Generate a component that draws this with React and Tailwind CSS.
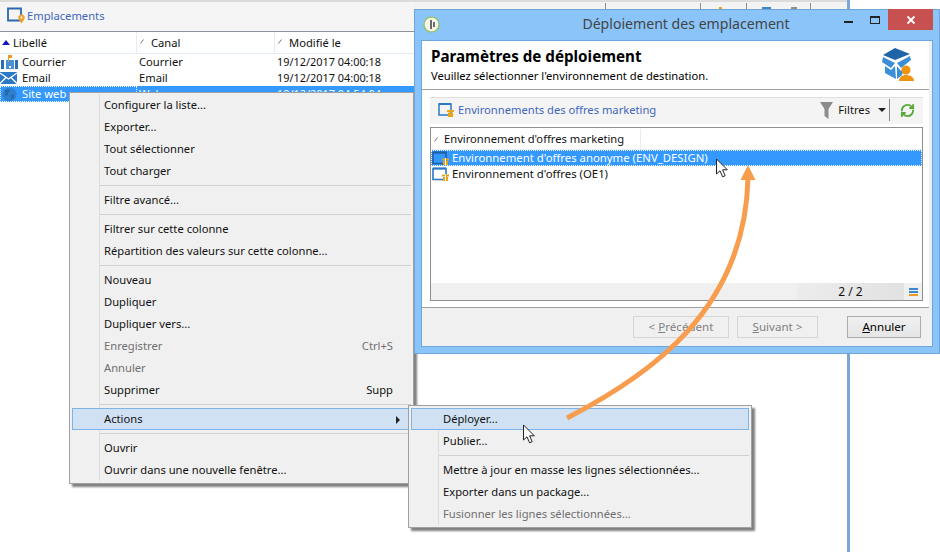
import React from "react";
import { RefreshCw } from "lucide-react";

const Cursor = ({ className }) => (
  <svg className={className} width="14" height="20" viewBox="0 0 14 20">
    <path d="M1.5 1v15l3.5-3.2 2.6 6 2.6-1.1-2.6-5.9h4.7z" fill="#fff" stroke="#222" strokeWidth="1" />
  </svg>
);

const EnvIcon = ({ dim }) => (
  <svg width="20" height="16" viewBox="0 0 20 16" className="shrink-0">
    <path d="M1 2.500h13v11H1z" fill={dim ? "none" : "#fff"} stroke={dim ? "#1f5fa8" : "#2a78c8"} strokeWidth="1.600" />
    <path d="M1 2.500h13" stroke={dim ? "#1f5fa8" : "#2a78c8"} strokeWidth="2" />
    <path d="M10 8.500h7v2h-7zM11 11h5v4h-5z" fill="#e8a317" />
    <path d="M13 8h1v7h-1z" fill="#fff" />
  </svg>
);

const MenuItem = ({ children, hint, active, disabled, arrow }) => (
  <div className={`relative flex h-[22px] items-center pl-[31px] pr-[17px] border ${active ? "border-[#7fb4e8] bg-[#cfe1f3]" : "border-transparent"} ${disabled ? "text-[#6f6f6f]" : "text-[#111]"}`}>
    <span className="flex-1 whitespace-nowrap">{children}</span>
    {hint && <span className="whitespace-nowrap">{hint}</span>}
    {arrow && <span className="absolute right-[10px] top-[7px] h-0 w-0 border-y-[4px] border-l-[4px] border-y-transparent border-l-[#222]" />}
  </div>
);

const Sep = () => (
  <div className="ml-[28px] flex h-[7px] items-center">
    <div className="h-px flex-1 bg-[#d0d0d0]" />
  </div>
);

const Row = ({ icon, label, canal, date }) => (
  <div className="flex h-[16px] items-center">
    <div className="flex w-[139px] items-center">
      <span className="flex w-[22px] shrink-0 items-center">{icon}</span>
      <span>{label}</span>
    </div>
    <div className="w-[138px]">{canal}</div>
    <div className="whitespace-nowrap text-[10.9px]">{date}</div>
  </div>
);

const Head = ({ w, pl, sort, children }) => (
  <div className={`relative flex h-full items-center border-r border-[#e3edf8] pt-[1px] ${w} ${pl}`}>
    {sort}
    <span>{children}</span>
  </div>
);

const Slash = ({ className }) => (
  <svg className={className} width="4" height="5" viewBox="0 0 4 5"><path d="M.5 4.5L3.5.5" stroke="#777" strokeWidth="1" fill="none" /></svg>
);

export default function App() {
  return (
    <div className="relative h-[552px] w-[940px] overflow-hidden bg-white text-[11.2px] leading-none text-[#111]" style={{ fontFamily: '"Noto Sans", sans-serif' }}>
      {/* Application behind */}
      <div className="flex h-full w-[850px] flex-col border-r-[3px] border-[#7aa7d8]">
        <div className="h-[2px] bg-[#dcdcdc]" />
        <div className="flex h-[30px] items-center border-b border-[#8b929a] bg-[#f5f5f5] pl-[7px] pb-[1px]">
          <svg width="19" height="18" viewBox="0 0 19 18" className="mr-[1px]">
            <path d="M1 1.500h13v12H1z" fill="none" stroke="#2a69ad" strokeWidth="1.800" />
            <path d="M14.500 7.500c2 0 3.300 1.400 3.300 3.100 0 1.800-2.100 4.200-3.300 6-1.200-1.800-3.300-4.200-3.300-6 0-1.700 1.300-3.100 3.300-3.100z" fill="#f0a030" />
            <circle cx="14.500" cy="10.500" r="1" fill="#fff" />
          </svg>
          <span className="text-[#3f66bd]">Emplacements</span>
        </div>
        <div className="flex h-[22px] items-center border-b border-[#e3edf8]">
          <Head w="w-[137px]" pl="pl-[13px]" sort={<span className="absolute left-[2px] top-[8px] h-0 w-0 border-x-[4px] border-b-[5px] border-x-transparent border-b-[#1414c8]" />}>Libellé</Head>
          <Head w="w-[138px]" pl="pl-[14px]" sort={<Slash className="absolute left-[3px] top-[7px]" />}>Canal</Head>
          <Head w="w-[572px]" pl="pl-[14px]" sort={<Slash className="absolute left-[3px] top-[7px]" />}>Modifié le</Head>
        </div>
        <Row
          label="Courrier" canal="Courrier" date="19/12/2017 04:00:18"
          icon={
            <svg width="20" height="15" viewBox="0 0 20 15">
              <path d="M1 5h3v9H1zM15 5h3v9h-3z" fill="#2a6fb5" />
              <path d="M6 5h8v9H6z" fill="#4a90d2" />
              <path d="M8 0h4v3H8z" fill="#eb9a28" />
              <path d="M8 0h1v7H8z" fill="#eb9a28" />
              <path d="M9 11h2v2H9z" fill="#fff" />
            </svg>
          }
        />
        <Row
          label="Email" canal="Email" date="19/12/2017 04:00:18"
          icon={
            <svg width="17" height="12" viewBox="0 0 17 12">
              <path d="M0 0h17v12H0z" fill="#2a78c8" />
              <path d="M0 1l8.500 6L17 1M0 11.500l6-6M17 11.500l-6-6" stroke="#fff" strokeWidth="1.300" fill="none" />
            </svg>
          }
        />
        <div className="flex h-[16px] items-center bg-[#3399ff] text-white">
          <div className="flex h-full w-[137px] items-center border border-dotted border-white">
            <span className="flex w-[21px] shrink-0 items-center pl-[1px]">
              <svg width="15" height="15" viewBox="0 0 15 15">
                <circle cx="7.500" cy="7.500" r="7" fill="#2f7fd0" />
                <path d="M3 3c2-1 4-1 5 0 0 2-2 2-2 4 0 2-2 2-3 1zM9 8c2-1 3 0 3 1s-1 3-3 3z" fill="#2769ad" />
              </svg>
            </span>
            <span>Site web</span>
          </div>
          <div className="w-[140px] pl-[2px]">Web</div>
          <div className="whitespace-nowrap text-[10.9px]">19/12/2017 04:54:04</div>
        </div>
      </div>

      {/* Top of the columns seen above the dialog */}
      <div className="absolute left-[414px] top-0 h-[9px] w-[433px] border-t-2 border-[#dcdcdc] bg-[#f3f3f3]">
        <div className="absolute left-[191px] top-[1px] h-[6px] w-px bg-[#8f8f8f]" />
        <div className="absolute left-[286px] top-[1px] h-[6px] w-px bg-[#8f8f8f]" />
        <div className="absolute left-[332px] top-[1px] h-[6px] w-px bg-[#8f8f8f]" />
        <div className="absolute left-[396px] top-[1px] h-[6px] w-px bg-[#8f8f8f]" />
        <div className="absolute left-[305px] top-[5px] h-[2px] w-[3px] bg-[#e8a317]" />
        <div className="absolute left-[348px] top-[5px] h-[2px] w-[9px] bg-[#3f86c8]" />
        <div className="absolute left-[377px] top-[5px] h-[2px] w-[6px] bg-[#8f8f8f]" />
      </div>

      {/* Context menu */}
      <div className="absolute left-[69px] top-[92px] w-[345px] border border-[#a0a0a0] bg-[#f0f0f0] px-[2px] pb-[2px] pt-[1px] shadow-[3px_3px_2px_#808080]">
        <div className="absolute bottom-[2px] left-[29px] top-[1px] w-px bg-[#dcdcdc]" />
        {[
          ["Configurer la liste..."], ["Exporter..."], ["Tout sélectionner"], ["Tout charger"], 0,
          ["Filtre avancé..."], 0,
          ["Filtrer sur cette colonne"], ["Répartition des valeurs sur cette colonne..."], 0,
          ["Nouveau"], ["Dupliquer"], ["Dupliquer vers..."], ["Enregistrer", "Ctrl+S", true], ["Annuler", null, true], ["Supprimer", "Supp"], 0,
        ].map((it, i) =>
          it === 0 ? <Sep key={i} /> : (
            <MenuItem key={i} hint={it[1]} disabled={it[2]}>{it[0]}</MenuItem>
          )
        )}
        <MenuItem active arrow>Actions</MenuItem>
        <Sep />
        <MenuItem>Ouvrir</MenuItem>
        <MenuItem>Ouvrir dans une nouvelle fenêtre...</MenuItem>
      </div>

      {/* Sub menu */}
      <div className="absolute left-[408px] top-[405px] w-[344px] border border-[#a0a0a0] bg-[#f0f0f0] p-[2px] shadow-[3px_3px_2px_#808080]">
        <div className="absolute bottom-[2px] left-[29px] top-[2px] w-px bg-[#dcdcdc]" />
        <MenuItem active>Déployer...</MenuItem>
        <MenuItem>Publier...</MenuItem>
        <Sep />
        <MenuItem>Mettre à jour en masse les lignes sélectionnées...</MenuItem>
        <MenuItem>Exporter dans un package...</MenuItem>
        <MenuItem disabled>Fusionner les lignes sélectionnées...</MenuItem>
      </div>

      {/* Dialog */}
      <div className="absolute left-[414px] top-[9px] flex h-[345px] w-[526px] flex-col border border-[#6ea6dc] bg-[#8ac4f8] px-[6px] pb-[6px]">
        <div className="relative flex h-[30px] shrink-0 items-center justify-center pb-[2px] pl-[18px]">
          <span className="text-[14.1px] text-[#444]">Déploiement des emplacement</span>
          <svg className="absolute left-[2px] top-[6px]" width="17" height="17" viewBox="0 0 17 17">
            <circle cx="8.500" cy="8.500" r="7.500" fill="#f4f6ea" stroke="#8fbf50" strokeWidth="1.200" />
            <path d="M7 4h2v9H7zM10 6h2v5h-2z" fill="#6a6a6a" />
          </svg>
          <div className="absolute left-[423px] top-[11px] h-[2px] w-[9px] bg-[#222]" />
          <div className="absolute left-[449px] top-[6px] h-[8px] w-[10px] border border-t-2 border-[#222]" />
          <div className="absolute left-[467px] top-[-1px] flex h-[21px] w-[45px] items-center justify-center bg-[#c75050]">
            <svg width="10" height="10" viewBox="0 0 10 10"><path d="M1.500 1.500l7 7M8.500 1.500l-7 7" stroke="#fff" strokeWidth="1.800" /></svg>
          </div>
        </div>

        <div className="flex min-h-0 flex-1 flex-col border border-[#6ea6dc] bg-[#f0f0f0] pr-[3px]">
          <div className="flex h-[49px] shrink-0 items-start justify-between border-b border-[#a0a0a0] bg-white pl-[9px] pr-[13px]">
            <div className="flex flex-col">
              <span className="mt-[8px] text-[15.2px] font-bold text-black">Paramètres de déploiement</span>
              <span className="mt-[6px] text-black">Veuillez sélectionner l'environnement de destination.</span>
            </div>
            <svg className="mt-[6px]" width="34" height="34" viewBox="0 0 34 34">
              <path d="M13 1l15 6-15 6L1 8z" fill="#1f64a8" />
              <path d="M1 10l12 6-4 5-9-6zM15 16l13-7 1 4-10 8zM3 19l6 4 4-4 1 13-11-6zM15 19l4 5 3-2-2 6-5 4z" fill="#3c8ed6" />
              <circle cx="24" cy="23" r="4.500" fill="#ee9410" />
              <path d="M17 34c0-4 3-6 7-6s8 2 8 6z" fill="#ee9410" />
            </svg>
          </div>
          <div className="flex flex-1 flex-col bg-white pb-[6px] pl-[8px] pr-[6px] pt-[7px]">
            <div className="flex h-[27px] shrink-0 items-center border-t border-[#dedede] bg-[#f4f4f4] pb-[2px] pl-[8px] pr-[8px]">
              <svg width="18" height="16" viewBox="0 0 18 16" className="mr-[2px]">
                <path d="M1 2h12v11H1z" fill="none" stroke="#2a78c8" strokeWidth="1.500" />
                <path d="M1 2h12" stroke="#2a78c8" strokeWidth="2" />
                <path d="M9 8h7v2H9zM10 10.500h5V15h-5z" fill="#e8a317" />
              </svg>
              <span className="flex-1 text-[#3f66bd]">Environnements des offres marketing</span>
              <svg width="13" height="18" viewBox="0 0 13 18" className="mr-[5px]"><path d="M0 1h13L8.500 8v10l-4-3V8z" fill="#8c8c8c" /></svg>
              <span>Filtres</span>
              <span className="ml-[8px] h-0 w-0 border-x-[4px] border-t-[4px] border-x-transparent border-t-[#222]" />
              <div className="ml-[3px] h-[22px] w-px bg-[#888]" />
              <RefreshCw size={15} strokeWidth={3} color="#58a838" className="ml-[10px]" />
            </div>
            <div className="mt-[3px] flex min-h-0 flex-1 flex-col border border-[#8f8f8f] bg-white">
              <div className="flex h-[22px] shrink-0 items-center border-b border-[#e3edf8] pt-[1px]">
                <div className="relative flex h-full w-[210px] items-center border-r border-[#e3edf8] pl-[13px]">
                  <Slash className="absolute left-[3px] top-[8px]" />
                  Environnement d'offres marketing
                </div>
              </div>
              <div className="flex h-[16px] shrink-0 items-center border border-dotted border-white bg-[#3399ff] text-[11.35px] text-white">
                <EnvIcon dim />
                <span>Environnement d'offres anonyme (ENV_DESIGN)</span>
              </div>
              <div className="flex h-[16px] shrink-0 items-center pl-[1px] text-[11.35px]">
                <EnvIcon />
                <span>Environnement d'offres (OE1)</span>
              </div>
              <div className="flex-1" />
              <div className="flex h-[17px] shrink-0 items-center bg-[#f0f0f0]">
                <div className="flex-1" />
                <div className="flex h-full w-[107px] items-center justify-center bg-gradient-to-r from-[#ececec] to-[#e2e2e2] text-[12px]">2 / 2</div>
                <div className="flex w-[18px] flex-col items-center gap-[1px]">
                  <div className="h-[2px] w-[9px] bg-[#3b87d0]" />
                  <div className="h-[2px] w-[9px] bg-[#3b87d0]" />
                  <div className="h-[2px] w-[9px] bg-[#eb9a28]" />
                </div>
              </div>
            </div>
          </div>
          <div className="flex h-[39px] shrink-0 items-center border-t border-[#a0a0a0] bg-[#f0f0f0] pl-[211px] text-[11.6px]">
            <button className="h-[22px] w-[96px] border border-[#d6d6d6] text-[#808080]">&lt; <span className="underline">P</span>récédent</button>
            <button className="ml-[8px] h-[22px] w-[81px] border border-[#d6d6d6] text-[#808080]"><span className="underline">S</span>uivant &gt;</button>
            <button className="ml-[29px] h-[22px] w-[74px] border border-[#acacac] bg-gradient-to-b from-[#f0f0f0] to-[#e5e5e5] text-black"><span className="underline">A</span>nnuler</button>
          </div>
        </div>
      </div>

      {/* Annotation arrow */}
      <svg className="pointer-events-none absolute left-0 top-0" width="940" height="552" viewBox="0 0 940 552">
        <path d="M567 418C650 375 745 310 748 178" fill="none" stroke="#f89c4e" strokeWidth="5" />
        <path d="M748 165l7.500 15h-15z" fill="#f89c4e" />
      </svg>
      <Cursor className="absolute left-[715px] top-[158px]" />
      <Cursor className="absolute left-[522px] top-[424px]" />
    </div>
  );
}
